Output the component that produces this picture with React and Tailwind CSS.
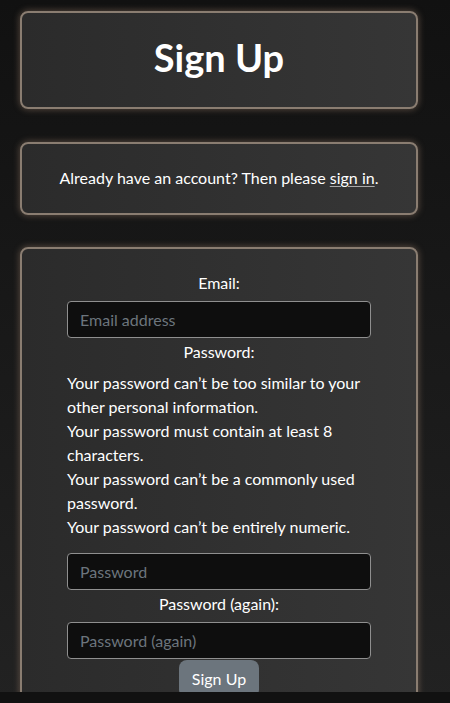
const card =
  "ml-5 w-[398px] rounded-lg border-2 border-[#8a7d71] bg-gradient-to-r from-[#2b2b2b] to-[#363636] shadow-[0_0_6px_1px_rgba(150,125,105,0.45)]";

const input =
  "block w-[304px] h-[37px] rounded-[4px] border border-[#8f8f8f] bg-[#0e0e0e] px-3 text-[16px] text-white placeholder:text-[#6c757d] outline-none";

export default function App() {
  return (
    <div
      className="h-[703px] overflow-hidden bg-gradient-to-b from-[#111111] to-[#222222] pt-[11px] text-white"
      style={{ fontFamily: 'Lato, "Noto Sans", sans-serif' }}
    >
      <div className={`${card} h-[98px] flex items-center justify-center`}>
        <h1 className="text-[38px] font-bold leading-none -mt-[6px]">Sign Up</h1>
      </div>

      <div className={`${card} mt-[33px] h-[73px] flex items-center justify-center`}>
        <p className="text-[16px] -mt-[1px]">
          Already have an account? Then please{" "}
          <a href="#" className="underline decoration-[#aaaaaa] underline-offset-2">
            sign in
          </a>
          .
        </p>
      </div>

      <div className={`${card} mt-[32px] pt-[22px] pb-10`}>
        <form className="flex flex-col items-center text-[16px] leading-6">
          <label className="mb-[6px]">Email:</label>
          <input className={input} placeholder="Email address" />
          <label className="mt-[2px]">Password:</label>
          <ul className="w-[304px] mt-[7px] text-left">
            <li>Your password can’t be too similar to your other personal information.</li>
            <li>Your password must contain at least 8 characters.</li>
            <li>Your password can’t be a commonly used password.</li>
            <li>Your password can’t be entirely numeric.</li>
          </ul>
          <input className={`${input} mt-[14px]`} placeholder="Password" type="password" />
          <label className="mt-[2px] mb-[6px]">Password (again):</label>
          <input className={input} placeholder="Password (again)" type="password" />
          <button
            type="button"
            className="mt-[1px] rounded-lg bg-[#6c757d] px-[13px] py-[7px] text-[16px] text-white"
          >
            Sign Up
          </button>
        </form>
      </div>

      <div className="fixed bottom-0 left-0 right-0 h-[11px] bg-[#111111]" />
    </div>
  );
}
